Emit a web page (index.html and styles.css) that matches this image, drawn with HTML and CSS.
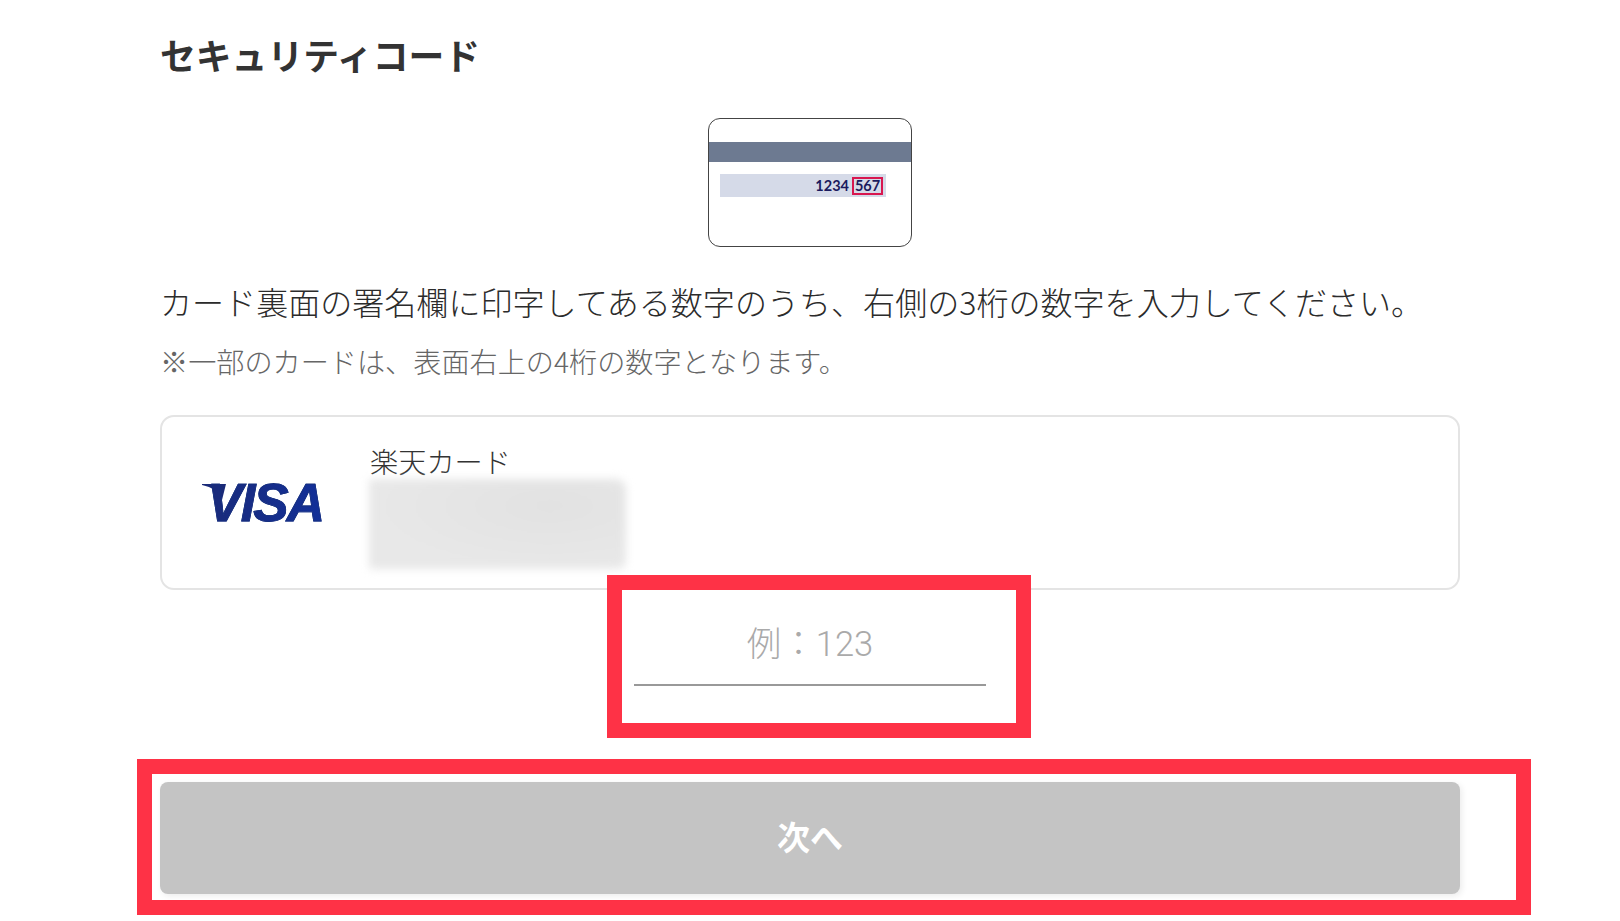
FILE: index.html
```html
<!DOCTYPE html>
<html lang="ja">
<head>
  <meta charset="UTF-8" />
  <meta name="viewport" content="width=device-width, initial-scale=1.0"/>
  <title>セキュリティコード</title>
  <link rel="stylesheet" href="styles.css">
</head>
<body>
  <main class="page">
    <h1 class="title">セキュリティコード</h1>

    <!-- Card back illustration -->
    <div class="card-back">
      <div class="card-stripe"></div>
      <div class="card-sign">
        <span class="card-num">1234</span>
        <span class="card-cvc">567</span>
      </div>
    </div>

    <p class="lead">カード裏面の署名欄に印字してある数字のうち、右側の3桁の数字を入力してください。</p>
    <p class="note">※一部のカードは、表面右上の4桁の数字となります。</p>

    <!-- Selected card -->
    <div class="pay-card">
      <div class="visa">
        <svg class="visa-flag" width="24" height="16" viewBox="0 0 24 16">
          <path d="M0 0H24L20 16C17 8 10 3 0 1Z" fill="#1a2a78"/>
        </svg>
        <span class="visa-text">VISA</span>
      </div>
      <div class="pay-info">
        <div class="pay-name">楽天カード</div>
        <div class="pay-hidden"></div>
      </div>
    </div>

    <!-- Code input -->
    <div class="code-mark">
      <input class="code-input" type="text" placeholder="例：123">
    </div>

    <!-- Next -->
    <div class="next-mark">
      <button class="next-btn" type="button">次へ</button>
    </div>
  </main>
</body>
</html>
```

FILE: styles.css
```css
* {
  box-sizing: border-box;
}
body {
  margin: 0;
  background: #fff;
  color: #333;
  font-family: "Noto Sans CJK JP", "Noto Sans", sans-serif;
  overflow: hidden;
}
.page {
  width: 1300px;
  margin-left: 160px;
  padding-top: 29px;
}
.title {
  margin: 0;
  font-size: 35.8px;
  line-height: 50px;
  font-weight: 700;
  color: #333;
}
.card-back {
  width: 204px;
  height: 129px;
  margin: 39px 0 0 548px;
  padding-top: 23px;
  border: 1.5px solid #444;
  border-radius: 12px;
  background: #fff;
}
.card-stripe {
  height: 20px;
  background: #6d7a91;
}
.card-sign {
  display: flex;
  justify-content: flex-end;
  align-items: center;
  gap: 3px;
  width: 166px;
  height: 23px;
  margin: 12px 0 0 11px;
  padding-right: 3px;
  background: #d5dae8;
  font-family: Lato, sans-serif;
  font-size: 14.5px;
  font-weight: 700;
  color: #1b1a5e;
}
.card-cvc {
  width: 31px;
  height: 18px;
  border: 2px solid #d8174f;
  line-height: 14px;
  text-align: center;
}
.lead {
  margin: 31px 0 0;
  font-size: 32.05px;
  line-height: 46px;
  font-weight: 300;
  color: #2b2b2b;
  white-space: nowrap;
}
.note {
  margin: 17px 0 0;
  font-size: 28.15px;
  line-height: 40px;
  font-weight: 300;
  color: #666;
  white-space: nowrap;
}
.pay-card {
  display: flex;
  align-items: flex-start;
  height: 175px;
  margin-top: 34px;
  border: 2px solid #e4e4e4;
  border-radius: 14px;
}
.visa {
  position: relative;
  width: 126px;
  height: 38px;
  margin: 67px 42px 0 39px;
}
.visa-flag {
  position: absolute;
  left: 1px;
  top: 0;
}
.visa-text {
  display: block;
  position: relative;
  padding-right: 4px;
  font-family: "Liberation Sans", sans-serif;
  font-size: 53px;
  line-height: 38px;
  font-weight: 700;
  font-style: italic;
  letter-spacing: -2px;
  text-align: right;
  background: linear-gradient(90deg, #1a2a78, #12309a);
  -webkit-background-clip: text;
  background-clip: text;
  color: transparent;
  -webkit-text-stroke: 0.8px #16307f;
}
.pay-info {
  padding-top: 24px;
}
.pay-name {
  margin-left: 1px;
  font-size: 28.2px;
  line-height: 40px;
  font-weight: 300;
  color: #333;
}
.pay-hidden {
  width: 257px;
  height: 90px;
  margin-top: -2px;
  border-radius: 3px 10px 8px 2px;
  background: radial-gradient(ellipse at 70% 30%, #e2e2e2, #e8e8e8 70%);
  filter: blur(4px);
}
.code-mark {
  position: relative;
  width: 424px;
  height: 163px;
  margin: -15px 0 0 447px;
  padding: 15px 29px 0 12px;
  border: 15.5px solid #fe3246;
  background: #fff;
}
.code-input {
  display: block;
  width: 352px;
  height: 81px;
  padding: 0 0 2px;
  border: 0;
  border-bottom: 2px solid #999;
  outline: 0;
  background: transparent;
  font-family: Roboto, "Noto Sans CJK JP", sans-serif;
  font-size: 34.5px;
  font-weight: 300;
  text-align: center;
}
.code-input::placeholder {
  color: #aaa;
  opacity: 1;
}
.next-mark {
  width: 1394px;
  height: 156px;
  margin: 21px 0 0 -23px;
  padding: 8px 56px 5px 8px;
  border: 15.5px solid #fe3246;
  background: #fff;
}
.next-btn {
  display: block;
  width: 100%;
  height: 112px;
  padding-bottom: 6px;
  border: 0;
  border-radius: 8px;
  background: #c4c4c4;
  box-shadow: 2px 2px 6px rgba(0, 0, 0, 0.08);
  font-family: "Noto Sans CJK JP", sans-serif;
  font-size: 33px;
  font-weight: 700;
  color: #fff;
}
```
